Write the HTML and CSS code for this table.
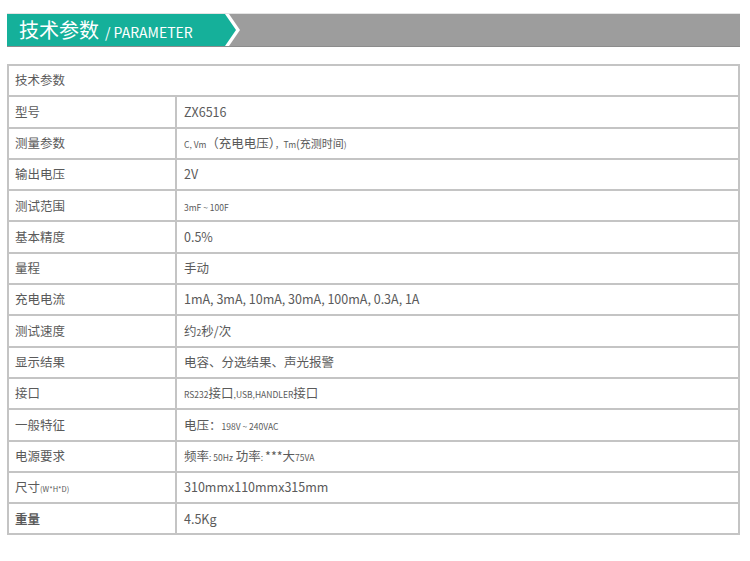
FILE: index.html
```html
<!DOCTYPE html>
<html lang="zh">
<head>
<meta charset="utf-8">
<link rel="stylesheet" href="styles.css">
</head>
<body>
<div class="page">
  <div class="banner">
    <div class="tab-edge">
      <div class="tab">
        <span class="tab-cn">技术参数</span><span class="tab-en">/ PARAMETER</span>
      </div>
    </div>
  </div>
  <table class="spec">
    <tr><td class="full" colspan="2">技术参数</td></tr>
    <tr><td class="k">型号</td><td class="v">ZX6516</td></tr>
    <tr><td class="k">测量参数</td><td class="v"><span class="xs">C, Vm</span>（充电电压）<span class="xs">，Tm</span><span class="sm">(充测时间</span><span class="xs">)</span></td></tr>
    <tr><td class="k">输出电压</td><td class="v">2V</td></tr>
    <tr><td class="k">测试范围</td><td class="v"><span class="xs">3mF ~ 100F</span></td></tr>
    <tr><td class="k">基本精度</td><td class="v">0.5%</td></tr>
    <tr><td class="k">量程</td><td class="v">手动</td></tr>
    <tr><td class="k">充电电流</td><td class="v">1mA, 3mA, 10mA, 30mA, 100mA, 0.3A, 1A</td></tr>
    <tr><td class="k">测试速度</td><td class="v">约<span class="xs">2</span>秒/次</td></tr>
    <tr><td class="k">显示结果</td><td class="v">电容、分选结果、声光报警</td></tr>
    <tr><td class="k">接口</td><td class="v"><span class="xs">RS232</span>接口<span class="xs">,USB,HANDLER</span>接口</td></tr>
    <tr><td class="k">一般特征</td><td class="v">电压：<span class="xs">198V ~ 240VAC</span></td></tr>
    <tr><td class="k">电源要求</td><td class="v">频率<span class="xs">: 50Hz</span> 功率<span class="xs">: </span>***大<span class="xs">75VA</span></td></tr>
    <tr><td class="k">尺寸<span class="xxs">(W*H*D)</span></td><td class="v">310mmx110mmx315mm</td></tr>
    <tr><td class="k bold">重量</td><td class="v">4.5Kg</td></tr>
  </table>
</div>
</body>
</html>
```

FILE: styles.css
```css
html, body {
  margin: 0;
  padding: 0;
  background: #ffffff;
}

.page {
  padding: 13px 10px 0 7px;
  font-family: "Noto Sans CJK SC", "Noto Sans", sans-serif;
  color: #5a5a5a;
}

.banner {
  width: 733px;
  height: 34px;
  background: #9d9d9d;
  border-top: 1px solid #e4e4e4;
  border-bottom: 1px solid #8c8c8c;
  box-sizing: border-box;
  display: flex;
}

.tab-edge {
  width: 234px;
  height: 100%;
  background: #ffffff;
  clip-path: polygon(0 0, 222px 0, 233px 50%, 222px 100%, 0 100%);
}

.tab {
  width: 230px;
  height: 100%;
  background: #15b09a;
  clip-path: polygon(0 0, 218px 0, 229px 50%, 218px 100%, 0 100%);
  display: flex;
  align-items: center;
  padding-left: 12px;
  box-sizing: border-box;
  color: #ffffff;
  white-space: nowrap;
}

.tab-cn {
  font-size: 20px;
  line-height: 1;
}

.tab-en {
  font-size: 14px;
  margin-left: 6px;
  margin-top: 3px;
}

.spec {
  margin-top: 17px;
  width: 733px;
  border-collapse: collapse;
  border: 2px solid #c4c4c4;
  font-size: 12.5px;
}

.spec td {
  border: 2px solid #c4c4c4;
  height: 31.3px;
  padding: 0 6px;
  box-sizing: border-box;
  vertical-align: middle;
  line-height: 1;
  white-space: nowrap;
}

.spec td.k {
  width: 168px;
}

.spec td.v {
  padding-left: 7px;
}

.xs {
  font-size: 8.5px;
}

.xxs {
  font-size: 7.5px;
}

.sm {
  font-size: 11px;
}

.bold {
  font-weight: 700;
}
```
